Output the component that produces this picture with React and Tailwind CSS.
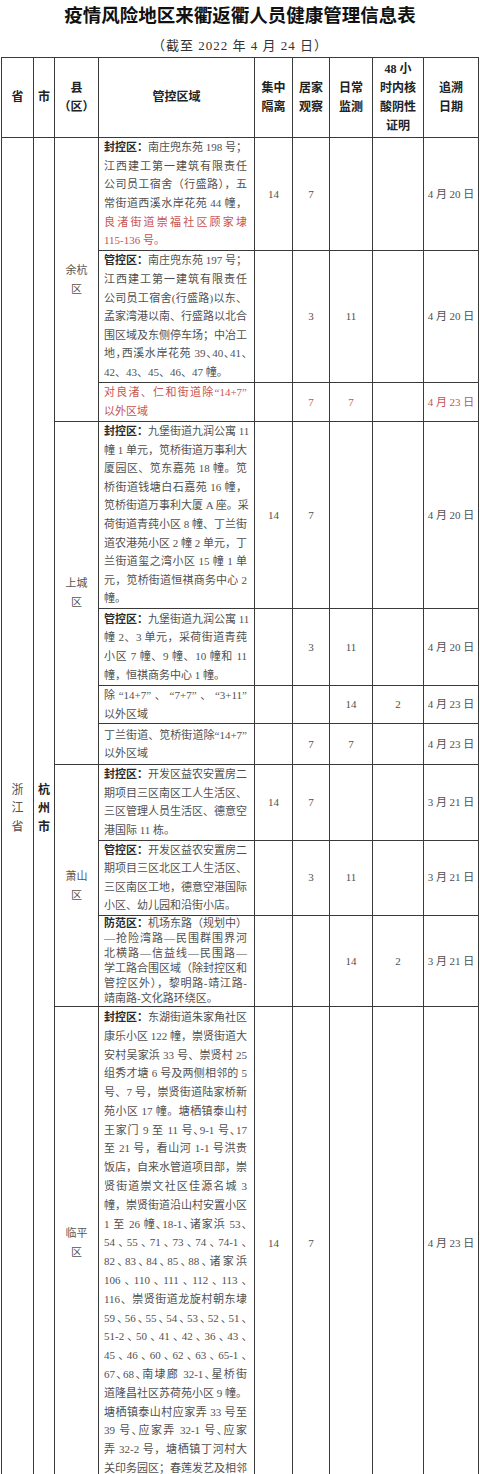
import React from "react";

const LABEL = /^(封控区|管控区|防范区)：/;

// "!" = red line, "~" = squeeze punctuation so the line fits
const rows = [
  {
    county: ["余杭", "区"],
    span: 3,
    h: "h-[113px]",
    lines: [
      "封控区：南庄兜东苑 198 号；",
      "江西建工第一建筑有限责任",
      "公司员工宿舍（行盛路），五",
      "常街道西溪水岸花苑 44 幢，",
      "!良渚街道崇福社区顾家埭",
      "!115-136 号。",
    ],
    nums: ["14", "7", "", ""],
    date: "4 月 20 日",
  },
  {
    h: "h-[132px]",
    lines: [
      "管控区：南庄兜东苑 197 号；",
      "江西建工第一建筑有限责任",
      "公司员工宿舍(行盛路)以东、",
      "孟家湾港以南、行盛路以北合",
      "围区域及东侧停车场；中冶工",
      "~地，西溪水岸花苑 39、40、41、",
      "42、43、45、46、47 幢。",
    ],
    nums: ["", "3", "11", ""],
    date: "4 月 20 日",
  },
  {
    h: "h-[39px]",
    red: true,
    lines: ["!对良渚、仁和街道除“14+7”", "!以外区域"],
    nums: ["", "7", "7", ""],
    date: "4 月 23 日",
  },
  {
    county: ["上城", "区"],
    span: 4,
    h: "h-[186px]",
    lines: [
      "封控区：九堡街道九润公寓 11",
      "幢 1 单元，笕桥街道万事利大",
      "厦园区、笕东嘉苑 18 幢。笕",
      "桥街道钱塘白石嘉苑 16 幢，",
      "笕桥街道万事利大厦 A 座。采",
      "荷街道青莼小区 8 幢、丁兰街",
      "道农港苑小区 2 幢 2 单元，丁",
      "兰街道玺之湾小区 15 幢 1 单",
      "元，笕桥街道恒祺商务中心 2",
      "幢。",
    ],
    nums: ["14", "7", "", ""],
    date: "4 月 20 日",
  },
  {
    h: "h-[77px]",
    lines: [
      "管控区：九堡街道九润公寓 11",
      "幢 2、3 单元，采荷街道青莼",
      "小区 7 幢、9 幢、10 幢和 11",
      "幢，恒祺商务中心 1 幢。",
    ],
    nums: ["", "3", "11", ""],
    date: "4 月 20 日",
  },
  {
    h: "h-[38px]",
    lines: ["除“14+7”、“7+7”、“3+11”", "以外区域"],
    nums: ["", "", "14", "2"],
    date: "4 月 23 日",
  },
  {
    h: "h-[41px]",
    lines: ["丁兰街道、笕桥街道除“14+7”", "以外区域"],
    nums: ["", "7", "7", ""],
    date: "4 月 23 日",
  },
  {
    county: ["萧山", "区"],
    span: 3,
    h: "h-[74px]",
    lines: [
      "封控区：开发区益农安置房二",
      "期项目三区南区工人生活区、",
      "三区管理人员生活区、德意空",
      "港国际 11 栋。",
    ],
    nums: ["14", "7", "", ""],
    date: "3 月 21 日",
  },
  {
    h: "h-[75px]",
    lines: [
      "管控区：开发区益农安置房二",
      "期项目三区北区工人生活区、",
      "三区南区工地，德意空港国际",
      "小区、幼儿园和沿街小店。",
    ],
    nums: ["", "3", "11", ""],
    date: "3 月 21 日",
  },
  {
    h: "h-[91px]",
    tight: true,
    lines: [
      "防范区：机场东路（规划中）",
      "—抢险湾路—民围群围界河",
      "北横路—信益线—民围路—",
      "学工路合围区域（除封控区和",
      "管控区外），黎明路-靖江路-",
      "靖南路-文化路环绕区。",
    ],
    nums: ["", "", "14", "2"],
    date: "3 月 21 日",
  },
  {
    county: ["临平", "区"],
    span: 1,
    h: "h-[473px]",
    loose: true,
    lines: [
      "封控区：东湖街道朱家角社区",
      "康乐小区 122 幢，崇贤街道大",
      "安村吴家浜 33 号、崇贤村 25",
      "组秀才塘 6 号及两侧相邻的 5",
      "号、7 号，崇贤街道陆家桥新",
      "苑小区 17 幢。塘栖镇泰山村",
      "~王家门 9 至 11 号、9-1 号、17",
      "至 21 号，看山河 1-1 号洪贵",
      "饭店，自来水管道项目部，崇",
      "贤街道崇文社区佳源名城 3",
      "幢，崇贤街道沿山村安置小区",
      "~1 至 26 幢、18-1、诸家浜 53、",
      "~54、55、71、73、74、74-1、",
      "~82、83、84、85、88、诸家浜",
      "~106、110、111、112、113、",
      "116、崇贤街道龙旋村朝东埭",
      "~59、56、55、54、53、52、51、",
      "~51-2、50、41、42、36、43、",
      "~45、46、60、62、63、65-1、",
      "~67、68、南埭廊 32-1、星桥街",
      "道隆昌社区苏荷苑小区 9 幢。",
      "塘栖镇泰山村应家弄 33 号至",
      "~39 号、应家弄 32-1 号、应家",
      "弄 32-2 号，塘栖镇丁河村大",
      "关印务园区；春莲发艺及相邻",
    ],
    nums: ["14", "7", "", ""],
    date: "4 月 23 日",
  },
];

function Line({ text, last }) {
  let t = text;
  const squeeze = t.startsWith("~");
  if (squeeze) t = t.slice(1);
  const red = t.startsWith("!");
  if (red) t = t.slice(1);
  const m = t.match(LABEL);
  return (
    <div
      className={
        "whitespace-nowrap " +
        (last ? "" : "[text-align-last:justify] ") +
        (squeeze ? "[font-feature-settings:'halt'] " : "") +
        (red ? "text-[#c9524f]" : "text-[#505050]")
      }
    >
      {m ? (
        <>
          <span className="font-bold text-[#2a2a2a]">{m[0]}</span>
          {t.slice(m[0].length)}
        </>
      ) : (
        t
      )}
    </div>
  );
}

function Head({ lines }) {
  return (
    <th className="border border-[#3a3a3a] p-0 text-center align-middle font-bold text-[12px] leading-[19px] text-[#222]">
      {lines.map((l) => (
        <div key={l}>{l}</div>
      ))}
    </th>
  );
}

export default function App() {
  return (
    <div className="w-[480px] bg-white font-['Liberation_Serif','Noto_Sans_CJK_SC',serif]">
      <div className="h-[34px] flex items-center justify-center text-[18.5px] font-bold text-[#111]">
        疫情风险地区来衢返衢人员健康管理信息表
      </div>
      <div className="h-[23px] flex items-center justify-center text-[13px] tracking-[1px] text-[#333]">
        （截至 2022 年 4 月 24 日）
      </div>
      <table className="ml-px w-[477px] table-fixed border-collapse">
        <colgroup>
          <col className="w-[32px]" />
          <col className="w-[21px]" />
          <col className="w-[44px]" />
          <col className="w-[156px]" />
          <col className="w-[38px]" />
          <col className="w-[37px]" />
          <col className="w-[43px]" />
          <col className="w-[51px]" />
          <col className="w-[55px]" />
        </colgroup>
        <thead>
          <tr className="h-[80px]">
            <Head lines={["省"]} />
            <Head lines={["市"]} />
            <Head lines={["县", "（区）"]} />
            <Head lines={["管控区域"]} />
            <Head lines={["集中", "隔离"]} />
            <Head lines={["居家", "观察"]} />
            <Head lines={["日常", "监测"]} />
            <Head lines={["48 小", "时内核", "酸阴性", "证明"]} />
            <Head lines={["追溯", "日期"]} />
          </tr>
        </thead>
        <tbody>
          {rows.map((r, i) => (
            <tr key={i} className={r.h}>
              {i === 0 && (
                <>
                  <td
                    rowSpan={rows.length}
                    className="border border-[#3a3a3a] p-0 text-center align-middle text-[12px] leading-[18.5px] text-[#555]"
                  >
                    <div>浙</div>
                    <div>江</div>
                    <div>省</div>
                  </td>
                  <td
                    rowSpan={rows.length}
                    className="border border-[#3a3a3a] p-0 text-center align-middle text-[12px] leading-[18.5px] font-bold text-[#222]"
                  >
                    <div>杭</div>
                    <div>州</div>
                    <div>市</div>
                  </td>
                </>
              )}
              {r.county && (
                <td
                  rowSpan={r.span}
                  className="border border-[#3a3a3a] p-0 text-center align-middle text-[11px] leading-[19px] text-[#555]"
                >
                  {r.county.map((c) => (
                    <div key={c}>{c}</div>
                  ))}
                </td>
              )}
              <td
                className={
                  "border border-[#3a3a3a] pl-[5px] pr-[7px] py-0 align-middle text-[11px] " +
                  (r.tight ? "leading-[15px]" : r.loose ? "leading-[18.8px]" : "leading-[18.6px]")
                }
              >
                {r.lines.map((l, j) => (
                  <Line key={j} text={l} last={j === r.lines.length - 1} />
                ))}
              </td>
              {r.nums.map((n, k) => (
                <td
                  key={k}
                  className={
                    "border border-[#3a3a3a] p-0 text-center align-middle text-[11px] " +
                    (r.red ? "text-[#c9524f]" : "text-[#505050]")
                  }
                >
                  {n}
                </td>
              ))}
              <td
                className={
                  "border border-[#3a3a3a] p-0 text-center align-middle text-[11px] whitespace-nowrap " +
                  (r.red ? "text-[#c9524f]" : "text-[#505050]")
                }
              >
                {r.date}
              </td>
            </tr>
          ))}
        </tbody>
      </table>
    </div>
  );
}
